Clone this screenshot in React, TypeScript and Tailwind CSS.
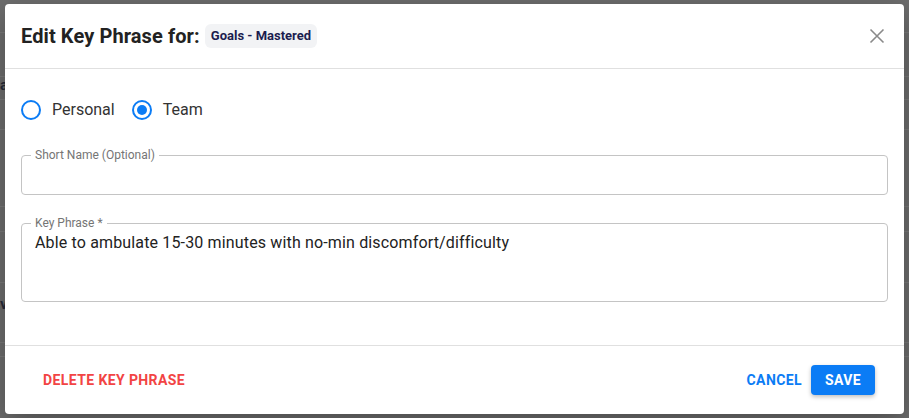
import React from 'react';

const rows = [
  { h: 'h-[33px]', text: '', pad: '' },
  { h: 'h-[44px]', text: '', pad: '' },
  { h: 'h-[23px]', text: 'a.', pad: 'pt-[1px]' },
  { h: 'h-[30px]', text: '', pad: '' },
  { h: 'h-[77px]', text: '', pad: '' },
  { h: 'h-[25px]', text: '', pad: '' },
  { h: 'h-[51px]', text: '', pad: '' },
  { h: 'h-[60px]', text: 'v', pad: 'pt-[14px]' },
  { h: 'h-[14px]', text: '', pad: '' },
];

const Radio = ({ label, checked }: { label: string; checked?: boolean }) => (
  <label className="flex items-center gap-[11px] cursor-pointer">
    <span className="flex h-5 w-5 items-center justify-center rounded-full border-2 border-[#0b7cf5]">
      {checked && <span className="h-[10px] w-[10px] rounded-full bg-[#0b7cf5]" />}
    </span>
    <span className="text-base text-[#333333]">{label}</span>
  </label>
);

const App = () => {
  return (
    <div className="relative h-[418px] w-[909px] overflow-hidden bg-[#6d6d6d] font-['Roboto',sans-serif]">
      {/* page behind the overlay */}
      <div className="flex flex-col">
        {rows.map((r, i) => (
          <div key={i} className={`${r.h} ${r.pad} border-b border-[#797979] text-[15px] leading-[14px] font-bold text-[#262a38]`}>
            {r.text}
          </div>
        ))}
      </div>

      <div className="absolute left-[5px] top-[4px] flex h-[410px] w-[899px] flex-col rounded bg-white shadow-[0_10px_30px_rgba(0,0,0,0.3)]">
        <div className="flex h-[65px] items-center justify-between border-b border-[#e0e0e0] pl-4 pr-[15px]">
          <div className="flex items-center gap-[5px]">
            <h2 className="text-[20px] font-bold tracking-[0.1px] text-[#222222]">Edit Key Phrase for:</h2>
            <span className="rounded-md bg-[#f2f3f5] px-[6px] py-[4px] text-[13px] leading-4 font-bold text-[#1c1d4f]">
              Goals - Mastered
            </span>
          </div>
          <button className="flex h-6 w-6 items-center justify-center text-[#8a8a8a]">
            <svg width="16" height="16" viewBox="0 0 16 16" fill="none" stroke="currentColor" strokeWidth="1.6">
              <path d="M1.5 1.5 L14.5 14.5 M14.5 1.5 L1.5 14.5" />
            </svg>
          </button>
        </div>

        <div className="flex flex-1 flex-col px-4 pt-[29px]">
          <div className="flex items-center gap-[17px]">
            <Radio label="Personal" />
            <Radio label="Team" checked />
          </div>

          <fieldset className="mt-[25px] h-[48px] rounded border border-[#c4c4c4] px-[9px]">
            <legend className="px-1 text-xs leading-4 text-[#757575]">Short Name (Optional)</legend>
          </fieldset>

          <fieldset className="mt-[20px] h-[87px] rounded border border-[#c4c4c4] px-[9px]">
            <legend className="px-1 text-xs leading-4 text-[#757575]">Key Phrase *</legend>
            <p className="pl-1 text-base leading-6 tracking-[0.15px] text-[#222222]">
              Able to ambulate 15-30 minutes with no-min discomfort/difficulty
            </p>
          </fieldset>
        </div>

        <div className="flex h-[69px] items-center justify-between border-t border-[#e0e0e0] pl-[30px] pr-[29px]">
          <button className="px-2 py-1 text-sm font-bold tracking-[0.4px] text-[#f24444]">DELETE KEY PHRASE</button>
          <div className="flex items-center gap-[9px]">
            <button className="text-sm font-bold tracking-[0.4px] text-[#0b7cf5]">CANCEL</button>
            <button className="h-[30px] w-[64px] rounded bg-[#0b7cf5] text-sm font-bold tracking-[0.4px] text-white shadow-[0_2px_4px_rgba(0,0,0,0.25)]">
              SAVE
            </button>
          </div>
        </div>
      </div>
    </div>
  );
};

export default App;
